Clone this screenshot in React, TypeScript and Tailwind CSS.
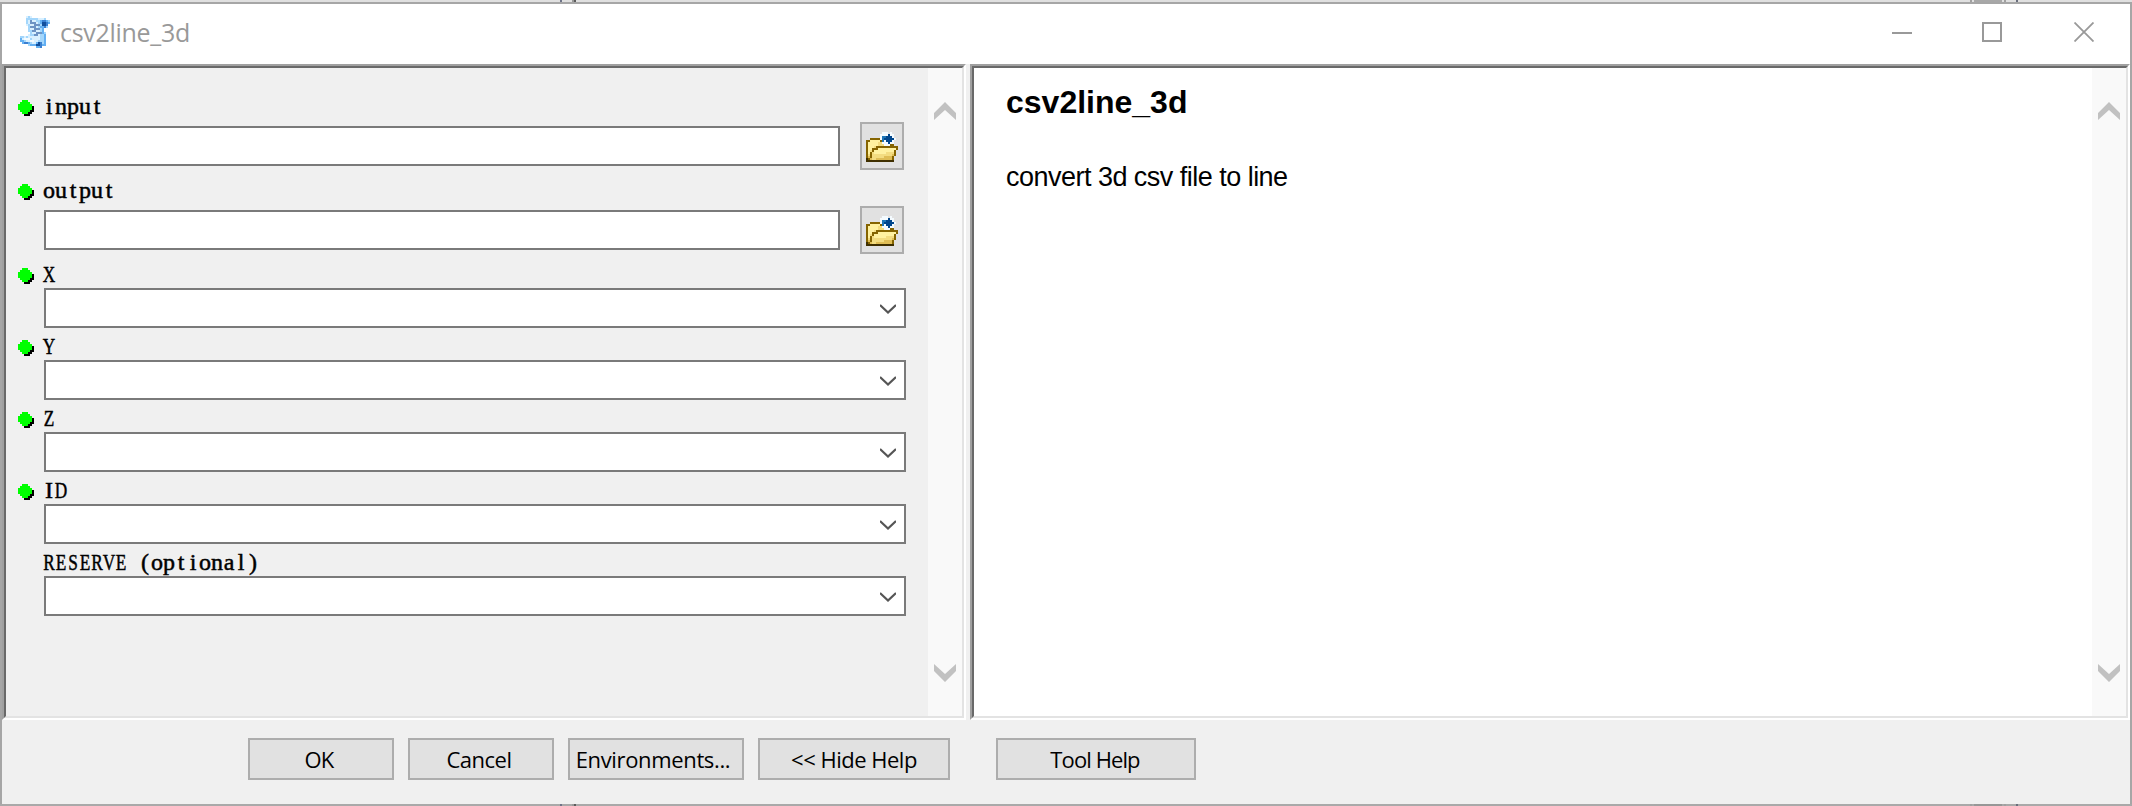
import React from "react";

const palette: Record<string, string> = {
  a: "#d9f0ff",
  b: "#a3d6fb",
  c: "#64b0f2",
  d: "#3a7fd0",
  e: "#124f9c",
  f: "#6d93c4",
  w: "#f4fbff",
  k: "#3f2f00",
  o: "#856400",
  y: "#fff1a0",
  g: "#f3dc80",
  h: "#dfbd55",
  n: "#00468c",
  m: "#1d76b8",
};

const scriptPixels = [
  "...aba.........",
  "...bbbbbbaaab..",
  "...bafaabbcddcb",
  "...bafffabceedc",
  "...abaafffbeed.",
  "....bfffabccdb.",
  "....baafffbc...",
  "....bbffaabc...",
  ".....baafffcb..",
  "....abbffabbc..",
  "bbabaaaaaabbc..",
  "cawwwbaaaabbc..",
  "ccbaawwaabbbc..",
  ".cddcbaacedbc..",
  "....bccceedcc..",
  "........ccd....",
];

const folderPixels = [
  "................",
  "........www.w...",
  ".......wwwwnww..",
  ".......wmmnnnw..",
  "..ooooowmnnnnnw.",
  "ooyyyyyomwnnnw..",
  "oyyyyyggwwwnww..",
  "oyyyyygggwwwoo..",
  "oyyygooooooooooo",
  "oyyoooyyyyyyyyyo",
  "oygoyyyyyyyyyyo.",
  "oyogyyyyyyggggo.",
  "ogoggggggggggho.",
  "ohogggggghhhho..",
  "kohgghhhhhhhho..",
  "kkkkkkkkkkkkkk..",
];

function PixelIcon({ rows, cols }: { rows: string[]; cols: number }) {
  return (
    <svg width={cols * 2} height={rows.length * 2} viewBox={`0 0 ${cols} ${rows.length}`} shapeRendering="crispEdges">
      {rows.flatMap((row, y) =>
        row.split("").map((key, x) =>
          palette[key] ? <rect key={`${x}-${y}`} x={x} y={y} width="1" height="1" fill={palette[key]} /> : null
        )
      )}
    </svg>
  );
}

function Dot() {
  return (
    <svg width="16" height="16" viewBox="0 0 8 8" shapeRendering="crispEdges">
      <path fill="#000" d="M7 3h1v3h-1v1h-1v1h-3v-1h2v-1h1v-1h1z" />
      <path fill="#00ff00" d="M2 0h3v1h1v1h1v3h-1v1h-1v1h-3v-1h-1v-1h-1v-3h1v-1h1z" />
    </svg>
  );
}

function BigChevron({ down = false }: { down?: boolean }) {
  return (
    <svg width="22" height="18" viewBox="0 0 22 18" className={down ? "rotate-180" : ""}>
      <path fill="#c1c1c1" d="M0 11L11 0L22 11V18L11 8L0 18Z" />
    </svg>
  );
}

function Scrollbar() {
  return (
    <div className="flex w-[34px] shrink-0 flex-col items-center justify-between bg-[#f9f9f9] pt-[34px] pb-[34px]">
      <BigChevron />
      <BigChevron down />
    </div>
  );
}

/* Fixed-pitch serif lettering: every character sits in a cell of equal width,
   and capitals are condensed to fit it. */
function FixedText({ text }: { text: string }) {
  return (
    <span className="flex pb-1 font-['Liberation_Serif',serif] text-[24px] leading-4 whitespace-pre text-black [-webkit-text-stroke:0.5px_#000]">
      {text.split("").map((char, i) => (
        <span
          key={i}
          className={`flex w-3 shrink-0 justify-center ${/[A-Z]/.test(char) ? (char === "I" ? "" : "scale-x-[0.72]") : ""}`}
        >
          {char}
        </span>
      ))}
    </span>
  );
}

function Label({ text, required }: { text: string; required: boolean }) {
  return (
    <div className="flex h-4 items-center">
      <div className="w-[25px] shrink-0">{required && <Dot />}</div>
      <FixedText text={text} />
    </div>
  );
}

function FileRow({ text }: { text: string }) {
  return (
    <div className="h-[84px]">
      <Label text={text} required />
      <div className="mt-1.5 ml-[26px] flex items-center gap-5">
        <div className="h-10 w-[796px] border-2 border-[#7a7a7a] bg-white" />
        <button className="flex h-12 w-11 items-center justify-center border-2 border-[#adadad] bg-[#e1e1e1]">
          <PixelIcon rows={folderPixels} cols={16} />
        </button>
      </div>
    </div>
  );
}

function ComboRow({ text, required = true }: { text: string; required?: boolean }) {
  return (
    <div className="h-[72px]">
      <Label text={text} required={required} />
      <div className="mt-1 ml-[26px] flex h-10 w-[862px] items-center justify-end border-2 border-[#7a7a7a] bg-white pt-0.5 pr-2">
        <svg width="16" height="10" viewBox="0 0 16 10">
          <path d="M0 1L8 8.5L16 1" fill="none" stroke="#555" strokeWidth="2.2" />
        </svg>
      </div>
    </div>
  );
}

function PushButton({ label, className }: { label: string; className: string }) {
  return (
    <button
      className={`flex h-[42px] items-center justify-center border-2 border-[#adadad] bg-[#e1e1e1] font-['Open_Sans',sans-serif] text-[22px] whitespace-nowrap text-black ${className}`}
    >
      {label}
    </button>
  );
}

function WindowControls() {
  return (
    <div className="ml-auto flex items-center pr-9 pb-1">
      <svg width="20" height="20" viewBox="0 0 20 20" shapeRendering="crispEdges">
        <path d="M0 11H20" stroke="#999" strokeWidth="2" />
      </svg>
      <svg className="ml-[70px]" width="20" height="20" viewBox="0 0 20 20" shapeRendering="crispEdges">
        <rect x="1" y="1" width="18" height="18" fill="none" stroke="#999" strokeWidth="2" />
      </svg>
      <svg className="ml-[72px]" width="20" height="20" viewBox="0 0 20 20">
        <path d="M0.5 0.5L19.5 19.5M19.5 0.5L0.5 19.5" stroke="#999" strokeWidth="1.8" />
      </svg>
    </div>
  );
}

/* Slivers of the window behind, visible along the top and bottom edges. */
function EdgeStrip({ className }: { className: string }) {
  return (
    <div className={`flex h-0.5 shrink-0 ${className}`}>
      <div className="ml-[560px] w-0.5 bg-[#6f7488]" />
      <div className="ml-2.5 w-0.5 bg-[#999]" />
      <div className="w-0.5 bg-[#5c5c5c]" />
      <div className="ml-[1394px] w-0.5 bg-[#a0a0a0]" />
      <div className="ml-0.5 w-7 bg-[#909090]/70" />
      <div className="ml-0.5 w-0.5 bg-[#a0a0a0]" />
      <div className="ml-2.5 w-0.5 bg-[#696e7c]" />
    </div>
  );
}

const sunken = "border-2 border-t-[#a0a0a0] border-r-white border-b-white border-l-[#a0a0a0]";
const sunkenInner = "border-2 border-t-[#696969] border-r-[#e3e3e3] border-b-[#e3e3e3] border-l-[#696969]";

export default function App() {
  return (
    <div className="flex h-[806px] w-[2132px] flex-col">
      <EdgeStrip className="bg-[#e0e0e0]" />
      <div className="flex h-[802px] flex-col border-x-2 border-t-2 border-[#a6a6a6] bg-[#f0f0f0]">
        <header className="flex h-[60px] shrink-0 items-center bg-white pl-[18px]">
          <div className="pb-1">
            <PixelIcon rows={scriptPixels} cols={15} />
          </div>
          <h1 className="ml-2.5 pb-0.5 font-['Open_Sans',sans-serif] text-[25px] tracking-[-0.3px] text-[#999]">csv2line_3d</h1>
          <WindowControls />
        </header>
        <main className="flex h-[656px] shrink-0">
          <section className={`flex w-[964px] ${sunken}`}>
            <div className={`flex grow ${sunkenInner}`}>
              <div className="grow pt-8 pl-3">
                <FileRow text="input" />
                <FileRow text="output" />
                <ComboRow text="X" />
                <ComboRow text="Y" />
                <ComboRow text="Z" />
                <ComboRow text="ID" />
                <ComboRow text="RESERVE (optional)" required={false} />
              </div>
              <Scrollbar />
            </div>
          </section>
          <section className={`ml-1 flex grow ${sunken}`}>
            <div className={`flex grow bg-white ${sunkenInner}`}>
              <div className="grow pt-[15px] pl-8 font-['Liberation_Sans',sans-serif] text-black">
                <h2 className="text-[32px] leading-[38px] font-bold">csv2line_3d</h2>
                <p className="mt-10 text-[27px] leading-8 tracking-[-0.52px]">convert 3d csv file to line</p>
              </div>
              <Scrollbar />
            </div>
          </section>
        </main>
        <footer className="flex pt-[18px] pl-[246px]">
          <PushButton label="OK" className="w-[146px] pr-1 tracking-[-0.8px]" />
          <PushButton label="Cancel" className="ml-3.5 w-[146px] pr-1 tracking-[-0.5px]" />
          <PushButton label="Environments..." className="ml-3.5 w-[176px] pr-1.5 tracking-[-0.35px]" />
          <PushButton label="<< Hide Help" className="ml-3.5 w-[192px] tracking-[-0.5px]" />
          <PushButton label="Tool Help" className="ml-[46px] w-[200px] pr-0.5 tracking-[-0.9px]" />
        </footer>
      </div>
      <EdgeStrip className="bg-[#a9a9a9]" />
    </div>
  );
}
